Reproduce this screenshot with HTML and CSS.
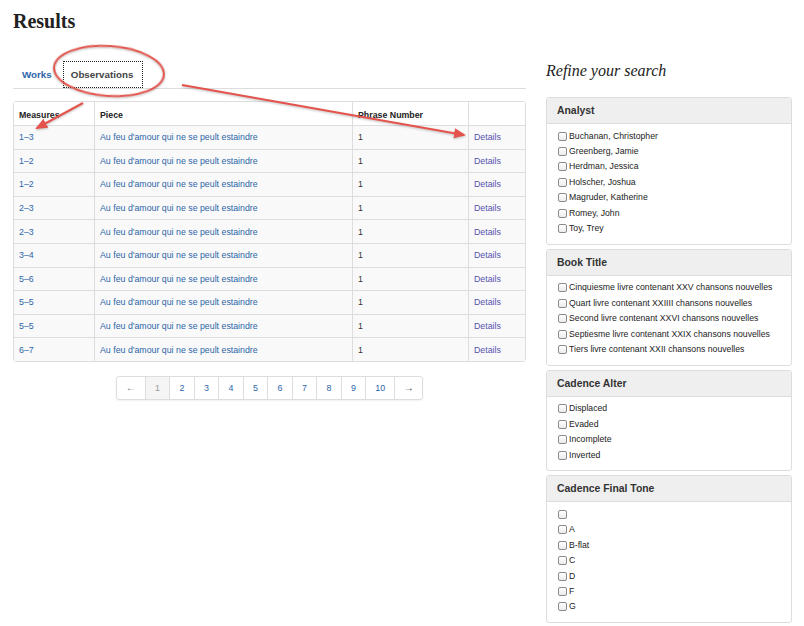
FILE: index.html
```html
<!DOCTYPE html>
<html>
<head>
<meta charset="utf-8">
<link rel="stylesheet" href="styles.css">
</head>
<body>
<div class="page">
  <h1 class="title">Results</h1>
  <div class="layout">
    <main class="main">
      <ul class="tabs">
        <li class="tab"><a href="#">Works</a></li>
        <li class="tab active"><a href="#">Observations</a></li>
      </ul>
      <table class="results">
        <thead>
          <tr><th class="c1">Measures</th><th class="c2">Piece</th><th class="c3">Phrase Number</th><th class="c4"></th></tr>
        </thead>
        <tbody>
          <tr><td><a href="#">1–3</a></td><td><a href="#">Au feu d'amour qui ne se peult estaindre</a></td><td>1</td><td><a class="det" href="#">Details</a></td></tr>
          <tr><td><a href="#">1–2</a></td><td><a href="#">Au feu d'amour qui ne se peult estaindre</a></td><td>1</td><td><a class="det" href="#">Details</a></td></tr>
          <tr><td><a href="#">1–2</a></td><td><a href="#">Au feu d'amour qui ne se peult estaindre</a></td><td>1</td><td><a class="det" href="#">Details</a></td></tr>
          <tr><td><a href="#">2–3</a></td><td><a href="#">Au feu d'amour qui ne se peult estaindre</a></td><td>1</td><td><a class="det" href="#">Details</a></td></tr>
          <tr><td><a href="#">2–3</a></td><td><a href="#">Au feu d'amour qui ne se peult estaindre</a></td><td>1</td><td><a class="det" href="#">Details</a></td></tr>
          <tr><td><a href="#">3–4</a></td><td><a href="#">Au feu d'amour qui ne se peult estaindre</a></td><td>1</td><td><a class="det" href="#">Details</a></td></tr>
          <tr><td><a href="#">5–6</a></td><td><a href="#">Au feu d'amour qui ne se peult estaindre</a></td><td>1</td><td><a class="det" href="#">Details</a></td></tr>
          <tr><td><a href="#">5–5</a></td><td><a href="#">Au feu d'amour qui ne se peult estaindre</a></td><td>1</td><td><a class="det" href="#">Details</a></td></tr>
          <tr><td><a href="#">5–5</a></td><td><a href="#">Au feu d'amour qui ne se peult estaindre</a></td><td>1</td><td><a class="det" href="#">Details</a></td></tr>
          <tr><td><a href="#">6–7</a></td><td><a href="#">Au feu d'amour qui ne se peult estaindre</a></td><td>1</td><td><a class="det" href="#">Details</a></td></tr>
        </tbody>
      </table>
      <div class="pager-wrap">
        <ul class="pager">
          <li class="arrow prev">←</li>
          <li class="current">1</li>
          <li>2</li><li>3</li><li>4</li><li>5</li><li>6</li><li>7</li><li>8</li><li>9</li><li>10</li>
          <li class="arrow next">→</li>
        </ul>
      </div>
    </main>
    <aside class="side">
      <h2 class="side-title">Refine your search</h2>
      <section class="panel">
        <div class="panel-head">Analyst</div>
        <div class="panel-body">
          <label class="opt"><input type="checkbox"> Buchanan, Christopher</label>
          <label class="opt"><input type="checkbox"> Greenberg, Jamie</label>
          <label class="opt"><input type="checkbox"> Herdman, Jessica</label>
          <label class="opt"><input type="checkbox"> Holscher, Joshua</label>
          <label class="opt"><input type="checkbox"> Magruder, Katherine</label>
          <label class="opt"><input type="checkbox"> Romey, John</label>
          <label class="opt"><input type="checkbox"> Toy, Trey</label>
        </div>
      </section>
      <section class="panel">
        <div class="panel-head">Book Title</div>
        <div class="panel-body">
          <label class="opt"><input type="checkbox"> Cinquiesme livre contenant XXV chansons nouvelles</label>
          <label class="opt"><input type="checkbox"> Quart livre contenant XXIIII chansons nouvelles</label>
          <label class="opt"><input type="checkbox"> Second livre contenant XXVI chansons nouvelles</label>
          <label class="opt"><input type="checkbox"> Septiesme livre contenant XXIX chansons nouvelles</label>
          <label class="opt"><input type="checkbox"> Tiers livre contenant XXII chansons nouvelles</label>
        </div>
      </section>
      <section class="panel">
        <div class="panel-head">Cadence Alter</div>
        <div class="panel-body">
          <label class="opt"><input type="checkbox"> Displaced</label>
          <label class="opt"><input type="checkbox"> Evaded</label>
          <label class="opt"><input type="checkbox"> Incomplete</label>
          <label class="opt"><input type="checkbox"> Inverted</label>
        </div>
      </section>
      <section class="panel">
        <div class="panel-head">Cadence Final Tone</div>
        <div class="panel-body">
          <label class="opt"><input type="checkbox"></label>
          <label class="opt"><input type="checkbox">A</label>
          <label class="opt"><input type="checkbox">B-flat</label>
          <label class="opt"><input type="checkbox">C</label>
          <label class="opt"><input type="checkbox">D</label>
          <label class="opt"><input type="checkbox">F</label>
          <label class="opt"><input type="checkbox">G</label>
        </div>
      </section>
    </aside>
  </div>
  <svg class="annot" width="804" height="626" viewBox="0 0 804 626">
    <defs>
      <marker id="head" markerWidth="12" markerHeight="10" refX="10" refY="5" orient="auto" markerUnits="userSpaceOnUse">
        <path d="M0,0 L12,5 L0,10 z" fill="#e4544c"/>
      </marker>
    </defs>
    <g class="marks" fill="none" stroke="#e4544c" stroke-width="2">
      <ellipse cx="109" cy="71" rx="55" ry="25" transform="rotate(4 109 71)"/>
      <line x1="83" y1="103" x2="37" y2="128" marker-end="url(#head)"/>
      <line x1="182" y1="85" x2="464" y2="135" marker-end="url(#head)"/>
    </g>
  </svg>
</div>
</body>
</html>
```

FILE: styles.css
```css
* { box-sizing: border-box; }
html, body { margin: 0; padding: 0; background: #fff; }
body {
  font-family: "Liberation Sans", Arial, sans-serif;
  font-size: 8.8px;
  color: #333;
}
a { color: #2c66a8; text-decoration: none; }

.page {
  position: relative;
  width: 804px;
  height: 626px;
  padding: 9px 12px 0 13px;
  overflow: hidden;
}

.title {
  margin: 0;
  font-family: "Liberation Serif", "Times New Roman", serif;
  font-weight: bold;
  font-size: 20px;
  line-height: 24px;
  color: #222;
}

.layout {
  display: flex;
  gap: 20px;
  margin-top: 28px;
}

.main { width: 513px; }
.side { width: 246px; }

/* Tabs */
.tabs {
  list-style: none;
  margin: 0;
  padding: 0;
  display: flex;
  border-bottom: 1px solid #ddd;
  height: 28px;
}
.tab { margin-right: 2px; }
.tab a {
  display: block;
  height: 27px;
  line-height: 27px;
  padding: 0 9px;
  font-size: 9.8px;
  font-weight: bold;
  color: #2c66a8;
}
.tab.active a {
  color: #444;
  background: #fff;
  padding: 0 8px;
  outline: 1px dotted #222;
  outline-offset: -1px;
  width: 80px;
}

/* Table */
.results {
  margin-top: 12px;
  width: 513px;
  border-collapse: separate;
  border-spacing: 0;
  border: 1px solid #ddd;
  border-radius: 3px;
  table-layout: fixed;
}
.results th, .results td {
  text-align: left;
  padding: 0 5px;
  border-left: 1px solid #ddd;
  border-top: 1px solid #ddd;
  white-space: nowrap;
  overflow: hidden;
}
.results tr > :first-child { border-left: 0; }
.results thead th {
  border-top: 0;
  height: 23px;
  padding-top: 2px;
  font-weight: bold;
  color: #222;
  background: #fff;
}
.results tbody td {
  height: 23.6px;
  background: #f9f9f9;
}
.results td:first-child { padding-left: 5px; }
.results td:last-child { padding-left: 5px; }
.results .c1 { width: 80px; }
.results .c2 { width: 258px; }
.results .c3 { width: 116px; }
.results .det { color: #5552b0; }

/* Pager */
.pager-wrap {
  display: flex;
  justify-content: center;
  margin-top: 14px;
}
.pager {
  list-style: none;
  margin: 0;
  padding: 0;
  display: flex;
  border: 1px solid #ddd;
  border-radius: 3px;
  box-shadow: 0 1px 2px rgba(0,0,0,0.06);
}
.pager li {
  height: 22px;
  line-height: 22px;
  width: 24.5px;
  text-align: center;
  color: #2c66a8;
  border-left: 1px solid #ddd;
  font-size: 8.9px;
}
.pager li:first-child { border-left: 0; }
.pager li.current { background: #f5f5f5; color: #999; }
.pager li.arrow { width: 28px; color: #777; font-size: 10px; }
.pager li.next { color: #333; }
.pager li:nth-child(11) { width: 29px; }

/* Sidebar */
.side-title {
  margin: 0 0 16px;
  font-family: "Liberation Serif", "Times New Roman", serif;
  font-style: italic;
  font-weight: normal;
  font-size: 16px;
  line-height: 20px;
  color: #222;
}

.panel {
  border: 1px solid #ddd;
  border-radius: 3px;
  margin-bottom: 4px;
  background: #fff;
}
.panel-head {
  height: 26px;
  line-height: 26px;
  padding: 0 10px;
  background: #efefef;
  border-bottom: 1px solid #ddd;
  font-weight: bold;
  font-size: 10.4px;
  color: #333;
  border-radius: 3px 3px 0 0;
}
.panel-body {
  padding: 4px 10px 8px 11px;
}
.opt {
  display: flex;
  align-items: center;
  height: 15.4px;
  font-size: 8.7px;
  color: #222;
  white-space: nowrap;
}
.opt input {
  -webkit-appearance: none;
  appearance: none;
  width: 9px;
  height: 9px;
  margin: 1px 2px 0 0;
  border: 1px solid #8a8a8a;
  border-radius: 2px;
  background: linear-gradient(#fff, #ececec);
  flex: none;
}

/* Annotations */
.annot {
  position: absolute;
  left: 0;
  top: 0;
  pointer-events: none;
}
.marks { filter: drop-shadow(0 1px 1px rgba(0,0,0,0.25)); }
```
